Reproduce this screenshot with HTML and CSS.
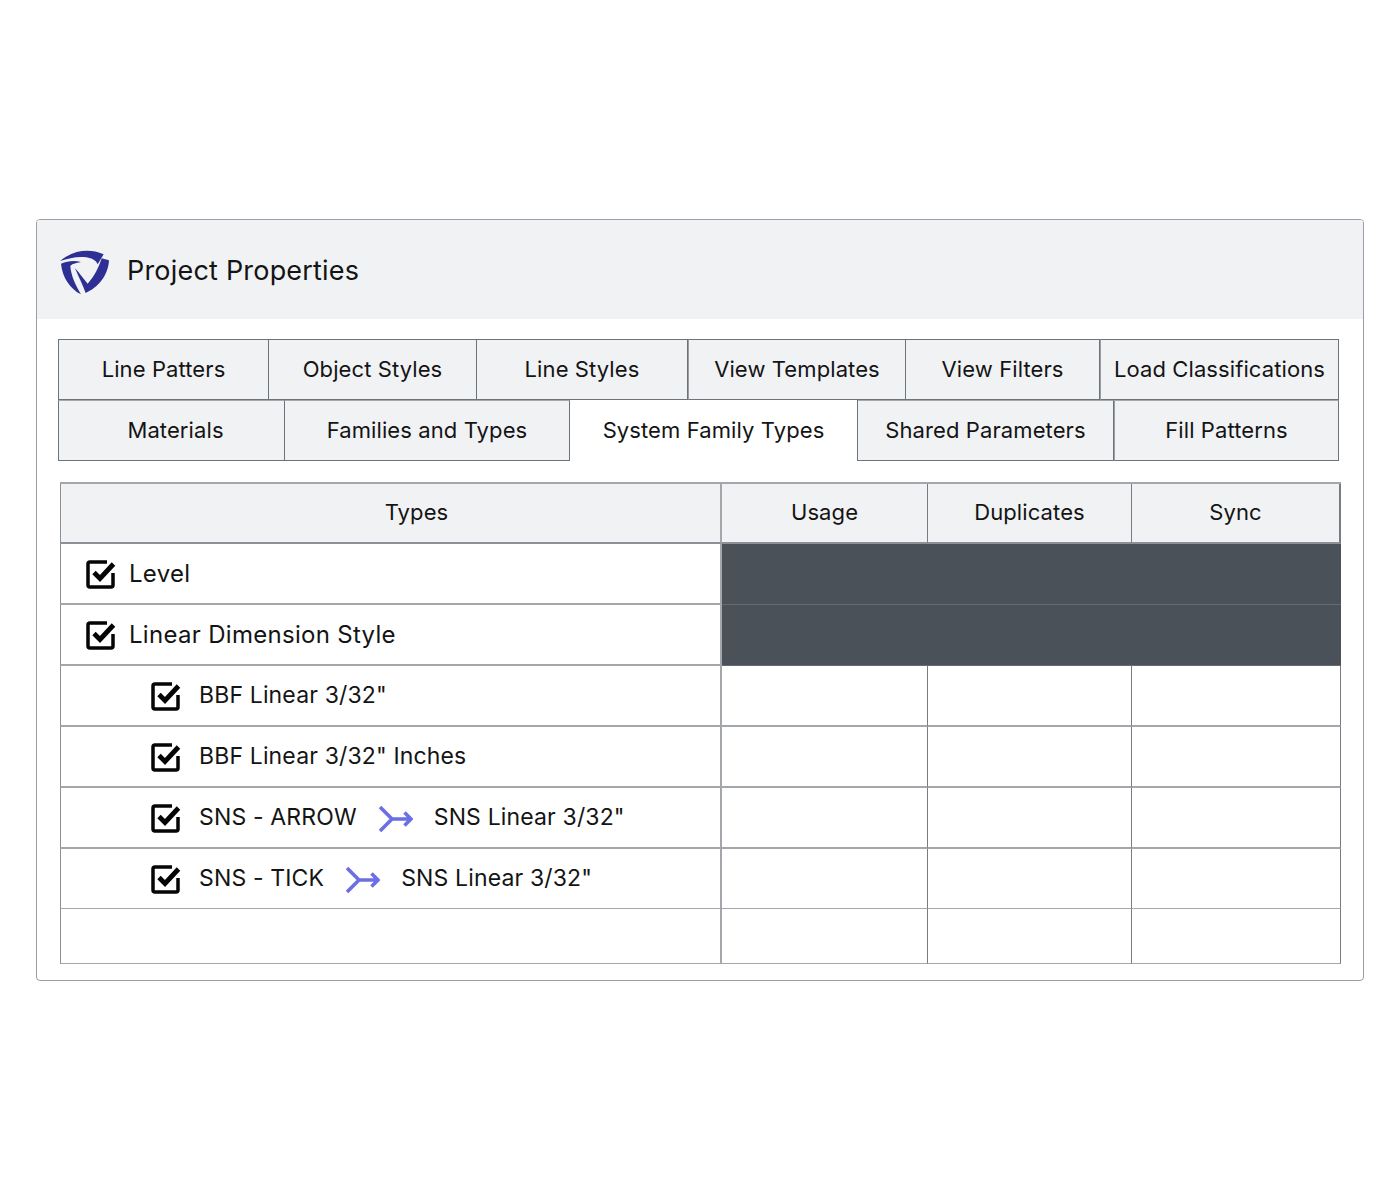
FILE: index.html
```html
<!DOCTYPE html>
<html lang="en">
<head>
<meta charset="utf-8">
<title>Project Properties</title>
<link rel="stylesheet" href="styles.css">
</head>
<body>
<svg class="defs" width="0" height="0" aria-hidden="true">
  <symbol id="check" viewBox="0 0 30 30">
    <path d="M21 3H4A2 2 0 0 0 2 5V26A2 2 0 0 0 4 28H25A2 2 0 0 0 27 26V14" fill="none" stroke="#050505" stroke-width="3.500"/>
    <path d="M8 13.500L14 19.500L27.500 5" fill="none" stroke="#050505" stroke-width="4.800"/>
  </symbol>
  <symbol id="merge" viewBox="0 0 34 26">
    <path d="M1 1L13 13L1 25M13 13H32M25.500 6.500L32 13L25.500 19.500" fill="none" stroke="#6a6fe6" stroke-width="3.600"/>
  </symbol>
</svg>
<main class="panel">
  <header class="panel-head">
    <svg class="logo" viewBox="0 0 180 168" aria-label="Logo">
      <path d="M15 54C50 24 100 14 146 34L128 64C122 52 112 46 94 43C68 39 42 46 15 54Z" fill="#2e2f95"/>
      <path d="M18 62C38 54 58 52 78 57C62 60 50 63 46 69C48 98 62 128 78 154C46 138 22 104 18 62Z" fill="#2e2f95"/>
      <path d="M162 52C160 96 130 134 92 150C84 128 72 104 60 76C72 88 84 106 98 122C118 100 130 76 140 46Z" fill="#2e2f95"/>
    </svg>
    <h1 class="panel-title">Project Properties</h1>
  </header>

  <nav class="tabs">
    <div class="tab-row tab-row-1">
      <div class="tab">Line Patters</div>
      <div class="tab">Object Styles</div>
      <div class="tab">Line Styles</div>
      <div class="tab tab-split">View Templates</div>
      <div class="tab">View Filters</div>
      <div class="tab tab-split">Load Classifications</div>
    </div>
    <div class="tab-row tab-row-2">
      <div class="tab tab-materials">Materials</div>
      <div class="tab">Families and Types</div>
      <div class="tab tab-active">System Family Types</div>
      <div class="tab">Shared Parameters</div>
      <div class="tab tab-split">Fill Patterns</div>
    </div>
  </nav>

  <section class="grid-table">
    <div class="row row-head">
      <div class="cell head-cell head-types">Types</div>
      <div class="cell head-cell">Usage</div>
      <div class="cell head-cell">Duplicates</div>
      <div class="cell head-cell">Sync</div>
    </div>
    <div class="row">
      <div class="cell name"><svg class="box"><use href="#check"/></svg><span>Level</span></div>
      <div class="cell dark"></div><div class="cell dark"></div><div class="cell dark"></div>
    </div>
    <div class="row">
      <div class="cell name"><svg class="box"><use href="#check"/></svg><span>Linear Dimension Style</span></div>
      <div class="cell dark"></div><div class="cell dark"></div><div class="cell dark"></div>
    </div>
    <div class="row">
      <div class="cell name child"><svg class="box"><use href="#check"/></svg><span>BBF Linear 3/32"</span></div>
      <div class="cell"></div><div class="cell"></div><div class="cell"></div>
    </div>
    <div class="row">
      <div class="cell name child"><svg class="box"><use href="#check"/></svg><span>BBF Linear 3/32" Inches</span></div>
      <div class="cell"></div><div class="cell"></div><div class="cell"></div>
    </div>
    <div class="row">
      <div class="cell name child"><svg class="box"><use href="#check"/></svg><span>SNS - ARROW</span><svg class="merge"><use href="#merge"/></svg><span>SNS Linear 3/32"</span></div>
      <div class="cell"></div><div class="cell"></div><div class="cell"></div>
    </div>
    <div class="row row-thin row-last">
      <div class="cell name child"><svg class="box"><use href="#check"/></svg><span>SNS - TICK</span><svg class="merge"><use href="#merge"/></svg><span>SNS Linear 3/32"</span></div>
      <div class="cell"></div><div class="cell"></div><div class="cell"></div>
    </div>
    <div class="row row-thin row-empty">
      <div class="cell"></div><div class="cell"></div><div class="cell"></div><div class="cell"></div>
    </div>
  </section>
</main>
</body>
</html>
```
FILE: styles.css
```css
* { box-sizing: border-box; }
html, body { margin: 0; background: #fff; }
body {
  padding: 219px 36px 0;
  font-family: Inter, "Noto Sans", sans-serif;
  color: #141414;
}
.defs { position: absolute; }
.panel {
  height: 762px;
  border: 1px solid #9a9fa5;
  border-radius: 4px;
  background: #fff;
  overflow: hidden;
}
.panel-head {
  height: 99px;
  background: #f1f2f4;
  display: flex;
  align-items: center;
  gap: 12px;
  padding-left: 18px;
}
.logo { width: 60px; height: 56px; flex: none; margin-top: 3px; }
.panel-title {
  margin: 2px 0 0;
  font-size: 27px;
  font-weight: 400;
  letter-spacing: 0.2px;
}
.tabs { margin: 20px 24px 0 21px; }
.tab-row { display: grid; height: 61px; font-size: 22px; letter-spacing: 0.1px; }
.tab-row-1 { grid-template-columns: 211px 208px 211px 218px 194px 239px; }
.tab-row-2 { grid-template-columns: 227px 285px 288px 256px 225px; }
.tab {
  display: flex;
  align-items: center;
  justify-content: center;
  padding-bottom: 2px;
  background: #f1f2f4;
  border: 1px solid #6d737a;
  border-left: 0;
  white-space: nowrap;
}
.tab:first-child { border-left: 1px solid #6d737a; }
.tab-split { border-left: 1px solid #9a9ea3; }
.tab-materials { padding-left: 8px; }
.tab-row-2 .tab { border-top-color: #a5a9ae; }
.tab-row-2 .tab-active {
  background: #fff;
  border: 0;
  border-right: 1px solid #6d737a;
}
.grid-table { margin: 21px 22px 0 23px; }
.row {
  display: grid;
  grid-template-columns: 662px 206px 204px 209px;
  height: 61px;
}
.row-head { height: 62px; }
.row-last { height: 60px; }
.row-empty { height: 55px; }
.cell {
  border-bottom: 2px solid #a3a7ac;
  border-right: 1px solid #777c82;
}
.row > .cell:first-child { border-left: 1px solid #8b9096; border-right: 2px solid #a3a7ac; }
.row-head { border-top: 2px solid #a3a7ac; }
.row-head .head-cell {
  background: #f1f2f4;
  display: flex;
  align-items: center;
  justify-content: center;
  padding-bottom: 2px;
  font-size: 22px;
  letter-spacing: 0.1px;
  border-bottom-color: #8d9197;
  border-right: 1px solid #777c82;
}
.row-head .head-cell:last-child { border-right-width: 2px; }
.row-head .head-types { padding-left: 52px; }
.dark {
  background: #4b5159;
  border-right: 0;
  border-bottom: 1px solid #666b72;
}
.name {
  display: flex;
  align-items: center;
  padding-left: 25px;
  font-size: 24px;
  letter-spacing: 0.3px;
  white-space: nowrap;
}
.name.child { padding-left: 90px; font-size: 23px; letter-spacing: 0.15px; }
.child span { margin-bottom: 2px; }
.box { width: 30px; height: 30px; flex: none; margin-right: 13px; }
.child .box { margin-right: 18px; }
.merge { width: 34px; height: 26px; flex: none; margin: 2px 21px 0 22px; }
.row-thin .cell { border-bottom-width: 1px; }
```
